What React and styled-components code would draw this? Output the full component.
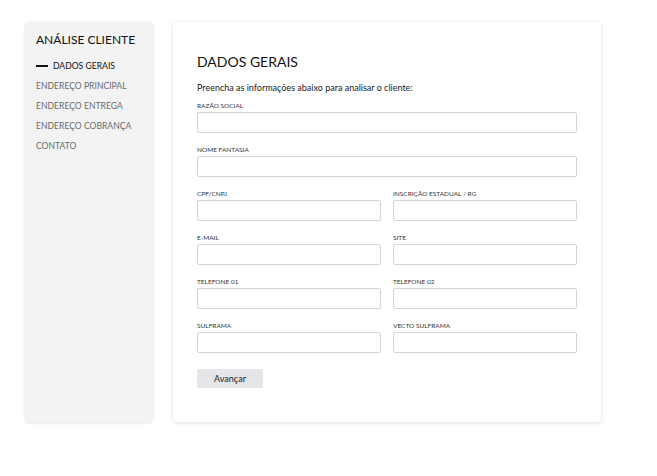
import styled, { createGlobalStyle } from "styled-components";

const GlobalStyle = createGlobalStyle`
  body {
    margin: 0;
    background: #ffffff;
    font-family: "Lato", "Noto Sans", sans-serif;
    color: #1a1a1a;
  }
`;

const Page = styled.div`
  display: flex;
  gap: 20px;
  padding: 22px 25px;
`;

const Sidebar = styled.aside`
  width: 128px;
  height: 400px;
  box-sizing: border-box;
  padding: 10px 11px;
  background-color: #f3f3f3;
  border-radius: 4px;
  box-shadow: rgba(0, 0, 0, 0.12) 0px 1px 3px;
`;

const SideTitle = styled.h2`
  margin: 0 0 8px;
  font-size: 12px;
  font-weight: 400;
  line-height: 16px;
  color: #111;
`;

const NavList = styled.ul`
  list-style: none;
  margin: 0;
  padding: 0;
`;

const NavItem = styled.li`
  display: flex;
  align-items: center;
  height: 20px;
  font-size: 8.6px;
  white-space: nowrap;
  color: ${({ $active }) => ($active ? "#111" : "#6b6b6b")};

  ${({ $active }) =>
    $active &&
    `
    &::before {
      content: "";
      width: 12px;
      height: 2px;
      margin-right: 5px;
      background: #111;
    }
  `}
`;

const Card = styled.main`
  width: 428px;
  height: 400px;
  box-sizing: border-box;
  padding: 32px 24px 0;
  background-color: #fff;
  border-radius: 4px;
  box-shadow: rgba(0, 0, 0, 0.13) 0px 1px 4px;
`;

const Title = styled.h1`
  margin: 0 0 12px;
  font-size: 14px;
  font-weight: 400;
  line-height: 16px;
  color: #111;
`;

const Intro = styled.p`
  margin: 0 0 6px;
  font-size: 9px;
  line-height: 12px;
  color: #222;
`;

const Grid = styled.div`
  display: grid;
  grid-template-columns: minmax(0, 1fr) minmax(0, 1fr);
  column-gap: 12px;
  row-gap: 11px;
`;

const Field = styled.div`
  display: flex;
  flex-direction: column;
  min-width: 0;
  grid-column: ${({ $full }) => ($full ? "1 / -1" : "auto")};
`;

const Label = styled.label`
  font-size: 6.5px;
  line-height: 11px;
  margin-bottom: 1px;
  color: #333;
  text-transform: uppercase;
`;

const Input = styled.input`
  width: 100%;
  min-width: 0;
  height: 21px;
  box-sizing: border-box;
  border: 1px solid #d2d4d8;
  border-radius: 2px;
  background: #fff;
  padding: 0 6px;
  font: inherit;
  outline: none;
`;

const Button = styled.button`
  margin-top: 16px;
  width: 66px;
  height: 19px;
  border: none;
  border-radius: 2px;
  background-color: #e5e6ea;
  font-family: inherit;
  font-size: 9px;
  color: #222;
  cursor: pointer;
`;

const navItems = [
  "DADOS GERAIS",
  "ENDEREÇO PRINCIPAL",
  "ENDEREÇO ENTREGA",
  "ENDEREÇO COBRANÇA",
  "CONTATO",
];

const fields = [
  { label: "Razão Social", full: true },
  { label: "Nome Fantasia", full: true },
  { label: "CPF/CNPJ" },
  { label: "Inscrição Estadual / RG" },
  { label: "E-mail" },
  { label: "Site" },
  { label: "Telefone 01" },
  { label: "Telefone 02" },
  { label: "Sulframa" },
  { label: "Vecto Sulframa" },
];

const App = () => {
  return (
    <>
      <GlobalStyle />
      <Page>
        <Sidebar>
          <SideTitle>ANÁLISE CLIENTE</SideTitle>
          <NavList>
            {navItems.map((item, idx) => (
              <NavItem key={item} $active={idx === 0}>
                {item}
              </NavItem>
            ))}
          </NavList>
        </Sidebar>
        <Card>
          <Title>DADOS GERAIS</Title>
          <Intro>Preencha as informações abaixo para analisar o cliente:</Intro>
          <Grid>
            {fields.map((f) => (
              <Field key={f.label} $full={f.full}>
                <Label>{f.label}</Label>
                <Input type="text" />
              </Field>
            ))}
          </Grid>
          <Button>Avançar</Button>
        </Card>
      </Page>
    </>
  );
};

export default App;
